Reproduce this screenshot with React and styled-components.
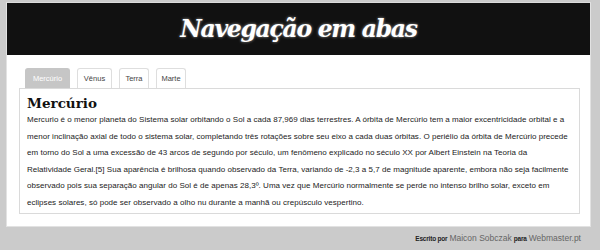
import React, { useState } from "react";
import styled, { createGlobalStyle } from "styled-components";

const Global = createGlobalStyle`
  html, body { margin: 0; padding: 0; }
  body {
    background: #cbcbcb;
    font-family: "Liberation Sans", Arial, sans-serif;
    width: 600px;
    height: 250px;
    overflow: hidden;
  }
`;

const Page = styled.div`
  padding: 2px 9px 0 6px;
`;

const Container = styled.div`
  background: #fff;
  border: 1px solid #e2e2e2;
  border-top-color: #dcdcdc;
`;

const Header = styled.header`
  height: 52px;
  background: #111;
  display: flex;
  align-items: center;
  justify-content: center;
`;

const Title = styled.h1`
  margin: 0;
  font-family: "DejaVu Serif", Georgia, serif;
  font-style: italic;
  font-weight: bold;
  font-size: 23.5px;
  letter-spacing: -1.3px;
  color: #fff;
  text-shadow: 0 0 3px rgba(255, 255, 255, 0.6);
`;

const Content = styled.div`
  padding: 13px 10px 12px 12px;
`;

const Tabs = styled.ul`
  list-style: none;
  margin: 0;
  padding: 0 0 0 6px;
  display: flex;
  gap: 7px;
  align-items: flex-end;
`;

const Tab = styled.li`
  width: ${(p) => p.$w}px;
  height: 20px;
  box-sizing: border-box;
  display: flex;
  align-items: center;
  justify-content: center;
  font-size: 7.5px;
  color: ${(p) => (p.$active ? "#fff" : "#444")};
  background: ${(p) => (p.$active ? "#c6c6c6" : "#fff")};
  border: 1px solid ${(p) => (p.$active ? "#c6c6c6" : "#dedede")};
  border-bottom: none;
  border-radius: 3px 3px 0 0;
  cursor: pointer;
`;

const Panel = styled.section`
  border: 1px solid #dadada;
  padding: 5px 7px 2px 7px;
  color: #222;
`;

const PanelTitle = styled.h2`
  margin: 0;
  font-family: "DejaVu Serif", Georgia, serif;
  font-weight: bold;
  font-size: 13.5px;
  line-height: 18px;
  color: #111;
`;

const PanelText = styled.p`
  margin: 0;
  font-size: 8px;
  line-height: 16.5px;
  letter-spacing: 0.03px;
`;

const Line = styled.span`
  display: block;
  white-space: nowrap;
`;

const Footer = styled.footer`
  display: flex;
  justify-content: flex-end;
  align-items: baseline;
  gap: 2px;
  padding: 6px 10px 0 0;
  font-size: 8.5px;
`;

const Small = styled.span`
  font-size: 6.5px;
  font-weight: bold;
  color: #222;
  letter-spacing: -0.2px;
`;

const Name = styled.span`
  color: #666;
`;

const planets = [
  { name: "Mercúrio", w: 45 },
  { name: "Vênus", w: 35 },
  { name: "Terra", w: 30 },
  { name: "Marte", w: 30 },
];

const lines = [
  "Mercurio é o menor planeta do Sistema solar orbitando o Sol a cada 87,969 dias terrestres. A órbita de Mercúrio tem a maior excentricidade orbital e a",
  "menor inclinação axial de todo o sistema solar, completando três rotações sobre seu eixo a cada duas órbitas. O periélio da órbita de Mercúrio precede",
  "em torno do Sol a uma excessão de 43 arcos de segundo por século, um fenômeno explicado no século XX por Albert Einstein na Teoria da",
  "Relatividade Geral.[5] Sua aparência é brilhosa quando observado da Terra, variando de -2,3 a 5,7 de magnitude aparente, embora não seja facilmente",
  "observado pois sua separação angular do Sol é de apenas 28,3º. Uma vez que Mercúrio normalmente se perde no intenso brilho solar, exceto em",
  "eclipses solares, só pode ser observado a olho nu durante a manhã ou crepúsculo vespertino.",
];

export default function App() {
  const [active, setActive] = useState(0);
  return (
    <>
      <Global />
      <Page>
        <Container>
          <Header>
            <Title>Navegação em abas</Title>
          </Header>
          <Content>
            <Tabs>
              {planets.map((p, i) => (
                <Tab key={p.name} $w={p.w} $active={i === active} onClick={() => setActive(i)}>
                  {p.name}
                </Tab>
              ))}
            </Tabs>
            <Panel>
              <PanelTitle>Mercúrio</PanelTitle>
              <PanelText>
                {lines.map((l, i) => (
                  <Line key={i}>{l}</Line>
                ))}
              </PanelText>
            </Panel>
          </Content>
        </Container>
        <Footer>
          <Small>Escrito por</Small>
          <Name>Maicon Sobczak</Name>
          <Small>para</Small>
          <Name>Webmaster.pt</Name>
        </Footer>
      </Page>
    </>
  );
}
